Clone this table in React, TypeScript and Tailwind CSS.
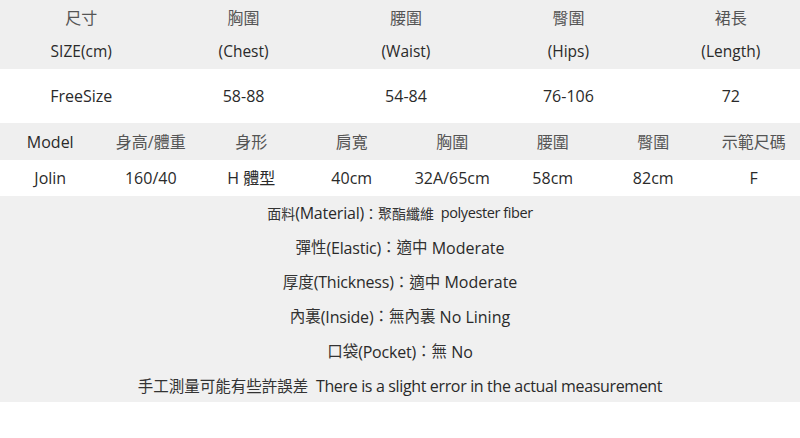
import React from "react";

const font = { fontFamily: '"Open Sans", "Noto Sans CJK TC", sans-serif' };

const top1 = ["尺寸", "胸圍", "腰圍", "臀圍", "裙長"];
const top2 = ["SIZE(cm)", "(Chest)", "(Waist)", "(Hips)", "(Length)"];
const top3 = ["FreeSize", "58-88", "54-84", "76-106", "72"];
const m1 = ["Model", "身高/體重", "身形", "肩寬", "胸圍", "腰圍", "臀圍", "示範尺碼"];
const m2 = ["Jolin", "160/40", "H 體型", "40cm", "32A/65cm", "58cm", "82cm", "F"];

type Seg = [string, "c" | "s" | "n" | "b" | "t" | "p"];
const notes: Seg[][] = [
  [["面料", "s"], ["(Material)", "n"], ["：聚酯纖維", "s"], ["  polyester fiber", "p"]],
  [["彈性", "c"], ["(Elastic)", "n"], ["：適中", "c"], [" Moderate", "b"]],
  [["厚度", "c"], ["(Thickness)", "n"], ["：適中", "c"], [" Moderate", "b"]],
  [["內裏", "c"], ["(Inside)", "n"], ["：無內裏", "c"], [" No Lining", "b"]],
  [["口袋", "c"], ["(Pocket)", "n"], ["：無", "c"], [" No", "b"]],
  [["手工測量可能有些許誤差", "c"], ["  There is a slight error in the actual measurement", "t"]],
];

const segCls: Record<string, string> = {
  c: "text-[15.5px] text-[#333]",
  s: "text-[14px] text-[#333]",
  n: "text-[16px] tracking-[-0.2px]",
  b: "text-[16px]",
  t: "text-[16px] tracking-[-0.35px]",
  p: "text-[14.5px] tracking-[-0.4px]",
};

export default function App() {
  return (
    <div className="w-[800px] h-[438px] overflow-hidden bg-white text-[#2a2a2a]" style={font}>
      <div className="bg-[#efefef] w-[812px]">
        <div className="grid grid-cols-5 h-[35px] items-center text-center text-[16px] text-[#555]">
          {top1.map((t) => (
            <div key={t}>{t}</div>
          ))}
        </div>
        <div className="grid grid-cols-5 h-[34px] items-center text-center text-[15.5px]">
          {top2.map((t) => (
            <div key={t}>{t}</div>
          ))}
        </div>
      </div>
      <div className="grid grid-cols-5 w-[812px] h-[54px] items-center text-center text-[16px]">
        {top3.map((t) => (
          <div key={t}>{t}</div>
        ))}
      </div>
      <div className="bg-[#efefef] grid grid-cols-8 w-[804px] h-[37px] items-center text-center text-[16px]">
        {m1.map((t, i) => (
          <div key={i} className={i === 0 ? "" : "text-[#555]"}>{t}</div>
        ))}
      </div>
      <div className="grid grid-cols-8 w-[804px] h-[36px] items-center text-center text-[16px]">
        {m2.map((t, i) => (
          <div key={i}>{t}</div>
        ))}
      </div>
      <div className="bg-[#f0f0f0] h-[206px] overflow-hidden flex flex-col items-center">
        {notes.map((line, i) => (
          <div key={i} className="h-[34.6px] shrink-0 flex items-center whitespace-pre">
            {line.map(([t, k], j) => (
              <span key={j} className={segCls[k]}>
                {t}
              </span>
            ))}
          </div>
        ))}
      </div>
    </div>
  );
}
